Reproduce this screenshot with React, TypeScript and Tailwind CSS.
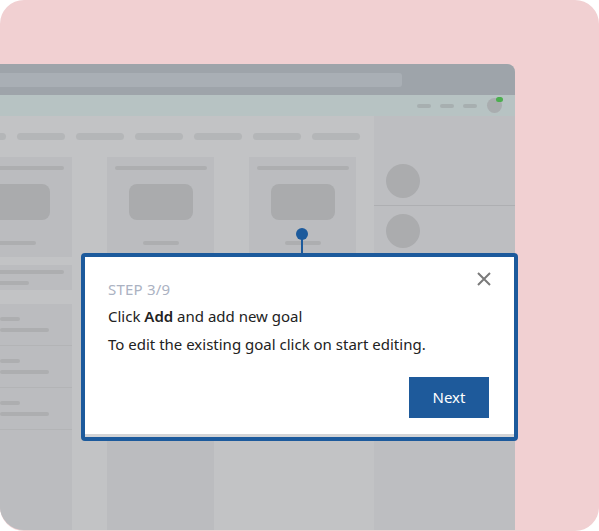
import React from "react";

const Pill = ({ w }: { w: string }) => <div className={`h-[7px] rounded-full bg-[#b4b6b8] ${w}`} />;

function Card({ offset = false }: { offset?: boolean }) {
  return (
    <div className="flex h-[100px] w-[107px] flex-col items-center bg-[#bbbcbf] pt-[9px]">
      <div className={`h-[4px] w-[92px] rounded-full bg-[#adaeb0] ${offset ? "-ml-[20px]" : ""}`} />
      <div className="mt-[14px] h-[36px] w-[64px] rounded-[8px] bg-[#aaabad]" />
      <div className="mt-[21px] h-[4px] w-[36px] rounded-full bg-[#adaeb0]" />
    </div>
  );
}

function ListRow() {
  return (
    <div className="flex h-[42px] flex-col justify-center gap-[7px] border-b border-[#b3b4b6]">
      <div className="h-[4px] w-[20px] rounded-full bg-[#adaeb0]" />
      <div className="h-[4px] w-[49px] rounded-full bg-[#adaeb0]" />
    </div>
  );
}

export default function App() {
  return (
    <div className="relative h-[531px] w-[599px] overflow-hidden bg-white font-['Inter',sans-serif]">
      <div className="absolute inset-0 rounded-[24px] bg-[#f1d0d2]" />
      <div className="absolute left-0 top-[64px] flex h-[466px] w-[515px] flex-col overflow-hidden rounded-tr-[8px] rounded-bl-[24px] bg-[#c2c3c5]">
        <div className="flex h-[31px] shrink-0 items-center bg-[#9ea4aa]">
          <div className="h-[14px] w-[402px] rounded-r-[3px] bg-[#a9afb5]" />
        </div>
        <div className="flex h-[21px] shrink-0 items-center justify-end gap-[9px] bg-[#b7c3c3] pr-[13px]">
          <div className="h-[4px] w-[14px] rounded-full bg-[#a7afb0]" />
          <div className="h-[4px] w-[14px] rounded-full bg-[#a7afb0]" />
          <div className="mr-[1px] h-[4px] w-[14px] rounded-full bg-[#a7afb0]" />
          <div className="relative h-[15px] w-[15px] rounded-full bg-[#a9adaf]">
            <div className="absolute -right-[1px] -top-[1px] h-[5px] w-[7px] rounded-full bg-[#4cae4f]" />
          </div>
        </div>
        <div className="flex flex-1">
          <div className="flex w-[374px] flex-col">
            <div className="flex h-[41px] items-center gap-[11px] pl-0">
              <div className="h-[7px] w-[6px] rounded-r-full bg-[#b4b6b8]" />
              <Pill w="w-[48px]" />
              <Pill w="w-[48px]" />
              <Pill w="w-[48px]" />
              <Pill w="w-[48px]" />
              <Pill w="w-[48px]" />
              <Pill w="w-[48px]" />
            </div>
            <div className="flex flex-1 gap-[35px]">
              <div className="flex w-[72px] flex-col">
                <div className="flex h-[100px] flex-col bg-[#bbbcbf] pt-[9px]">
                  <div className="h-[4px] w-[64px] rounded-r-full bg-[#adaeb0]" />
                  <div className="mt-[14px] h-[36px] w-[50px] rounded-r-[8px] bg-[#aaabad]" />
                  <div className="mt-[21px] h-[4px] w-[36px] rounded-r-full bg-[#adaeb0]" />
                </div>
                <div className="mt-[8px] flex h-[25px] flex-col justify-center gap-[7px] bg-[#bbbcbf]">
                  <div className="h-[4px] w-[64px] rounded-r-full bg-[#adaeb0]" />
                  <div className="h-[4px] w-[29px] rounded-r-full bg-[#adaeb0]" />
                </div>
                <div className="mt-[14px] flex-1 bg-[#bbbcbf]">
                  <ListRow />
                  <ListRow />
                  <ListRow />
                </div>
              </div>
              <div className="flex w-[107px] flex-col">
                <Card />
                <div className="mt-[8px] flex-1 bg-[#bbbcbf]" />
              </div>
              <div className="flex w-[107px] flex-col">
                <Card />
              </div>
            </div>
          </div>
          <div className="flex flex-1 flex-col bg-[#bdbec1]">
            <div className="flex h-[90px] items-end border-b border-[#aeafb2] pb-[7px] pl-[12px]">
              <div className="h-[34px] w-[34px] rounded-full bg-[#abacae]" />
            </div>
            <div className="pl-[12px] pt-[8px]">
              <div className="h-[34px] w-[34px] rounded-full bg-[#abacae]" />
            </div>
          </div>
        </div>
      </div>

      <div className="absolute left-[296px] top-[228px] h-[12px] w-[12px] rounded-full bg-[#1c5a9c]" />
      <div className="absolute left-[301px] top-[238px] h-[16px] w-[2px] bg-[#1c5a9c]" />

      <div className="absolute left-[81px] top-[253px] w-[437px] rounded-[4px] border-4 border-[#1c5a9c] bg-white">
        <div className="relative border-b-[3px] border-[#d3d4d6] px-[23px] pb-[16px] pt-[21px]">
          <div className="text-[15px] leading-[22px] tracking-[0.2px] text-[#abb2c2]">STEP 3/9</div>
          <div className="mt-[5px] text-[15px] leading-[22px] text-[#222]">
            Click <span className="font-semibold">Add</span> and add new goal
          </div>
          <div className="mt-[6px] text-[15px] leading-[22px] text-[#222]">To edit the existing goal click on start editing.</div>
          <div className="mt-[22px] flex justify-end pr-[2px]">
            <button className="h-[41px] w-[80px] bg-[#1e5a9b] text-[15px] text-white">Next</button>
          </div>
          <svg className="absolute right-[22px] top-[14px]" width="16" height="16" viewBox="0 0 16 16" fill="none" stroke="#7a7a7a" strokeWidth="2">
            <path d="M2 2l12 12M14 2L2 14" />
          </svg>
        </div>
      </div>
    </div>
  );
}
